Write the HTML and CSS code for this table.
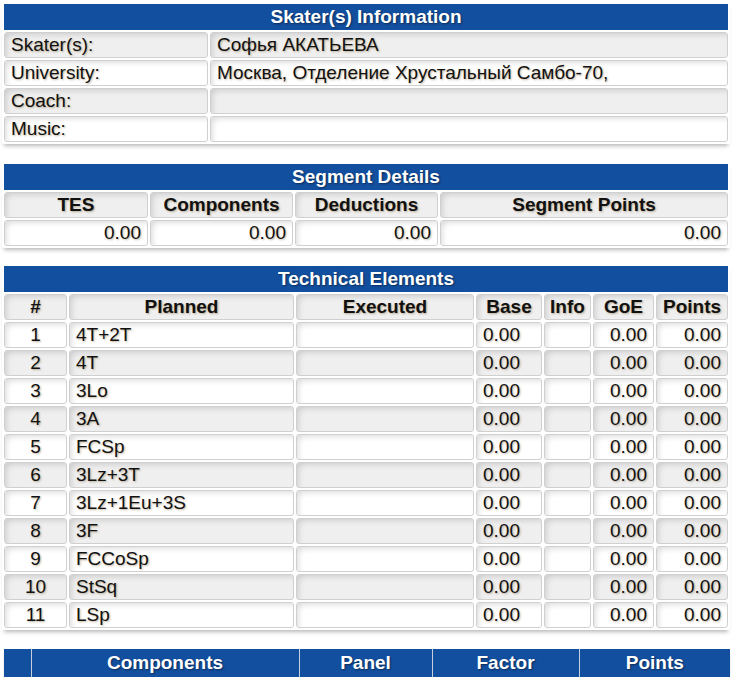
FILE: index.html
```html
<!DOCTYPE html>
<html>
<head>
<meta charset="utf-8">
<link rel="stylesheet" href="styles.css">
</head>
<body>
<div class="page">
  <table class="grid info">
    <colgroup><col class="c-label"><col></colgroup>
    <tr><th class="title" colspan="2">Skater(s) Information</th></tr>
    <tr class="alt"><td>Skater(s):</td><td>Софья АКАТЬЕВА</td></tr>
    <tr><td>University:</td><td>Москва, Отделение Хрустальный Самбо-70,</td></tr>
    <tr class="alt"><td>Coach:</td><td></td></tr>
    <tr><td>Music:</td><td></td></tr>
  </table>

  <table class="grid seg">
    <colgroup><col class="c-tes"><col class="c-comp"><col class="c-ded"><col></colgroup>
    <tr><th class="title" colspan="4">Segment Details</th></tr>
    <tr class="alt head"><th>TES</th><th>Components</th><th>Deductions</th><th>Segment Points</th></tr>
    <tr><td class="num">0.00</td><td class="num">0.00</td><td class="num">0.00</td><td class="num">0.00</td></tr>
  </table>

  <table class="grid tech">
    <colgroup><col class="c-no"><col class="c-plan"><col class="c-exec"><col class="c-base"><col class="c-info"><col class="c-goe"><col></colgroup>
    <tr><th class="title" colspan="7">Technical Elements</th></tr>
    <tr class="alt head"><th>#</th><th>Planned</th><th>Executed</th><th>Base</th><th>Info</th><th>GoE</th><th>Points</th></tr>
    <tr><td class="ctr">1</td><td>4T+2T</td><td></td><td>0.00</td><td></td><td class="num">0.00</td><td class="num">0.00</td></tr>
    <tr class="alt"><td class="ctr">2</td><td>4T</td><td></td><td>0.00</td><td></td><td class="num">0.00</td><td class="num">0.00</td></tr>
    <tr><td class="ctr">3</td><td>3Lo</td><td></td><td>0.00</td><td></td><td class="num">0.00</td><td class="num">0.00</td></tr>
    <tr class="alt"><td class="ctr">4</td><td>3A</td><td></td><td>0.00</td><td></td><td class="num">0.00</td><td class="num">0.00</td></tr>
    <tr><td class="ctr">5</td><td>FCSp</td><td></td><td>0.00</td><td></td><td class="num">0.00</td><td class="num">0.00</td></tr>
    <tr class="alt"><td class="ctr">6</td><td>3Lz+3T</td><td></td><td>0.00</td><td></td><td class="num">0.00</td><td class="num">0.00</td></tr>
    <tr><td class="ctr">7</td><td>3Lz+1Eu+3S</td><td></td><td>0.00</td><td></td><td class="num">0.00</td><td class="num">0.00</td></tr>
    <tr class="alt"><td class="ctr">8</td><td>3F</td><td></td><td>0.00</td><td></td><td class="num">0.00</td><td class="num">0.00</td></tr>
    <tr><td class="ctr">9</td><td>FCCoSp</td><td></td><td>0.00</td><td></td><td class="num">0.00</td><td class="num">0.00</td></tr>
    <tr class="alt"><td class="ctr">10</td><td>StSq</td><td></td><td>0.00</td><td></td><td class="num">0.00</td><td class="num">0.00</td></tr>
    <tr><td class="ctr">11</td><td>LSp</td><td></td><td>0.00</td><td></td><td class="num">0.00</td><td class="num">0.00</td></tr>
  </table>

  <table class="bluehead">
    <colgroup><col class="b-empty"><col class="b-comp"><col class="b-panel"><col class="b-factor"><col></colgroup>
    <tr><th></th><th>Components</th><th>Panel</th><th>Factor</th><th>Points</th></tr>
  </table>
</div>
</body>
</html>
```

FILE: styles.css
```css
html, body {
  margin: 0;
  padding: 0;
  background: #ffffff;
}

.page {
  padding: 2px 2px 0 2px;
  font-family: "Liberation Sans", Arial, sans-serif;
  font-size: 19px;
  color: #111111;
}

.grid {
  width: 728px;
  border-collapse: separate;
  border-spacing: 2px;
  table-layout: fixed;
  box-shadow: 0 4px 4px -2px rgba(0, 0, 0, 0.28);
}

.grid td,
.grid th {
  height: 24px;
  padding: 0 6px;
  border: 1px solid #d0d0d0;
  border-radius: 3px;
  background: #ffffff;
  box-shadow: inset 4px 4px 6px -3px rgba(0, 0, 0, 0.16);
  text-shadow: 1px 1px 2px rgba(120, 90, 40, 0.45);
  white-space: nowrap;
  overflow: hidden;
  text-align: left;
  font-weight: normal;
  line-height: 24px;
}

.grid tr.alt td,
.grid tr.alt th {
  background: #efefef;
}

.grid th {
  font-weight: bold;
  text-align: center;
}

.grid tr.head th {
  background: #efefef;
  padding: 0 2px;
}

.grid th.title {
  height: 26px;
  line-height: 26px;
  background: #134f9f;
  color: #ffffff;
  border: none;
  border-radius: 0;
  box-shadow: none;
  padding: 0;
  text-shadow: 1px 1px 2px rgba(0, 0, 0, 0.45);
}

.grid td.num { text-align: right; }
.grid td.ctr { text-align: center; }

.info { margin-bottom: 18px; }
.seg { margin-bottom: 16px; }
.tech { margin-bottom: 19px; }

.c-label { width: 204px; }

.c-tes { width: 144px; }
.c-comp { width: 143px; }
.c-ded { width: 143px; }

.c-no { width: 63px; }
.c-plan { width: 225px; }
.c-exec { width: 178px; }
.c-base { width: 66px; }
.c-info { width: 47px; }
.c-goe { width: 61px; }

.bluehead {
  width: 726px;
  margin-left: 2px;
  border-collapse: collapse;
  table-layout: fixed;
  box-shadow: 0 3px 3px -1px rgba(0, 0, 0, 0.28);
}

.bluehead th {
  height: 28px;
  padding: 0;
  background: #134f9f;
  color: #ffffff;
  font-weight: bold;
  text-align: center;
  border-left: 1px solid #c8d0dc;
  text-shadow: 1px 1px 2px rgba(0, 0, 0, 0.45);
}

.bluehead th:first-child { border-left: none; }

.b-empty { width: 27px; }
.b-comp { width: 268px; }
.b-panel { width: 133px; }
.b-factor { width: 147px; }
```
